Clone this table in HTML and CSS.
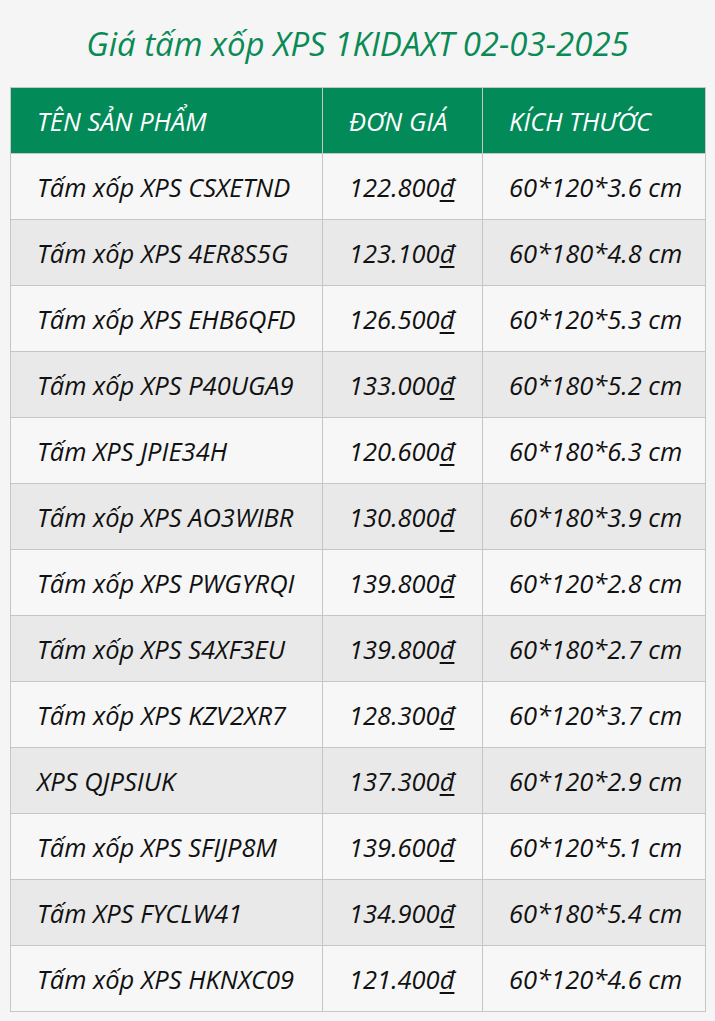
FILE: index.html
```html
<!DOCTYPE html>
<html lang="vi">
<head>
  <meta charset="UTF-8">
  <meta name="viewport" content="width=device-width, initial-scale=1.0">
  <title>Giá tấm xốp XPS</title>
  <link rel="stylesheet" href="styles.css">
</head>
<body>
  <div class="wrapper">
    <h1 class="title">Giá tấm xốp XPS 1KIDAXT 02-03-2025</h1>
    <table class="price-table">
      <thead>
        <tr>
          <th class="col-name">TÊN SẢN PHẨM</th>
          <th class="col-price">ĐƠN GIÁ</th>
          <th class="col-size">KÍCH THƯỚC</th>
        </tr>
      </thead>
      <tbody>
        <tr><td>Tấm xốp XPS CSXETND</td><td>122.800<u>đ</u></td><td>60*120*3.6 cm</td></tr>
        <tr><td>Tấm xốp XPS 4ER8S5G</td><td>123.100<u>đ</u></td><td>60*180*4.8 cm</td></tr>
        <tr><td>Tấm xốp XPS EHB6QFD</td><td>126.500<u>đ</u></td><td>60*120*5.3 cm</td></tr>
        <tr><td>Tấm xốp XPS P40UGA9</td><td>133.000<u>đ</u></td><td>60*180*5.2 cm</td></tr>
        <tr><td>Tấm XPS JPIE34H</td><td>120.600<u>đ</u></td><td>60*180*6.3 cm</td></tr>
        <tr><td>Tấm xốp XPS AO3WIBR</td><td>130.800<u>đ</u></td><td>60*180*3.9 cm</td></tr>
        <tr><td>Tấm xốp XPS PWGYRQI</td><td>139.800<u>đ</u></td><td>60*120*2.8 cm</td></tr>
        <tr><td>Tấm xốp XPS S4XF3EU</td><td>139.800<u>đ</u></td><td>60*180*2.7 cm</td></tr>
        <tr><td>Tấm xốp XPS KZV2XR7</td><td>128.300<u>đ</u></td><td>60*120*3.7 cm</td></tr>
        <tr><td>XPS QJPSIUK</td><td>137.300<u>đ</u></td><td>60*120*2.9 cm</td></tr>
        <tr><td>Tấm xốp XPS SFIJP8M</td><td>139.600<u>đ</u></td><td>60*120*5.1 cm</td></tr>
        <tr><td>Tấm XPS FYCLW41</td><td>134.900<u>đ</u></td><td>60*180*5.4 cm</td></tr>
        <tr><td>Tấm xốp XPS HKNXC09</td><td>121.400<u>đ</u></td><td>60*120*4.6 cm</td></tr>
      </tbody>
    </table>
  </div>
</body>
</html>
```

FILE: styles.css
```css
body {
  margin: 0; background-color: #f5f5f5;
  font-family: "Open Sans", "Noto Sans", sans-serif; font-style: italic; }
.wrapper {
  padding: 0 10px; }
.title {
  margin: 0; height: 87px; display: flex; align-items: center; justify-content: center;
  font-size: 33px; font-weight: normal; color: #0a8a55; }
.price-table {
  width: 695px; border-collapse: collapse; table-layout: fixed; }
.price-table th, .price-table td {
  box-sizing: border-box; height: 66px; padding: 0 0 0 26px; border: 1px solid #c6c6c6;
  text-align: left; font-size: 25.5px; font-weight: normal; color: #111; white-space: nowrap; }
.price-table th {
  background-color: #028a59; color: #fff; }
.col-name { width: 312px; }
.col-price { width: 160px; }
.col-size { width: 223px; }
.price-table tbody tr:nth-child(odd) td { background-color: #f7f7f7; }
.price-table tbody tr:nth-child(even) td { background-color: #e9e9e9; }
.price-table u { text-underline-offset: 3px; }
```
